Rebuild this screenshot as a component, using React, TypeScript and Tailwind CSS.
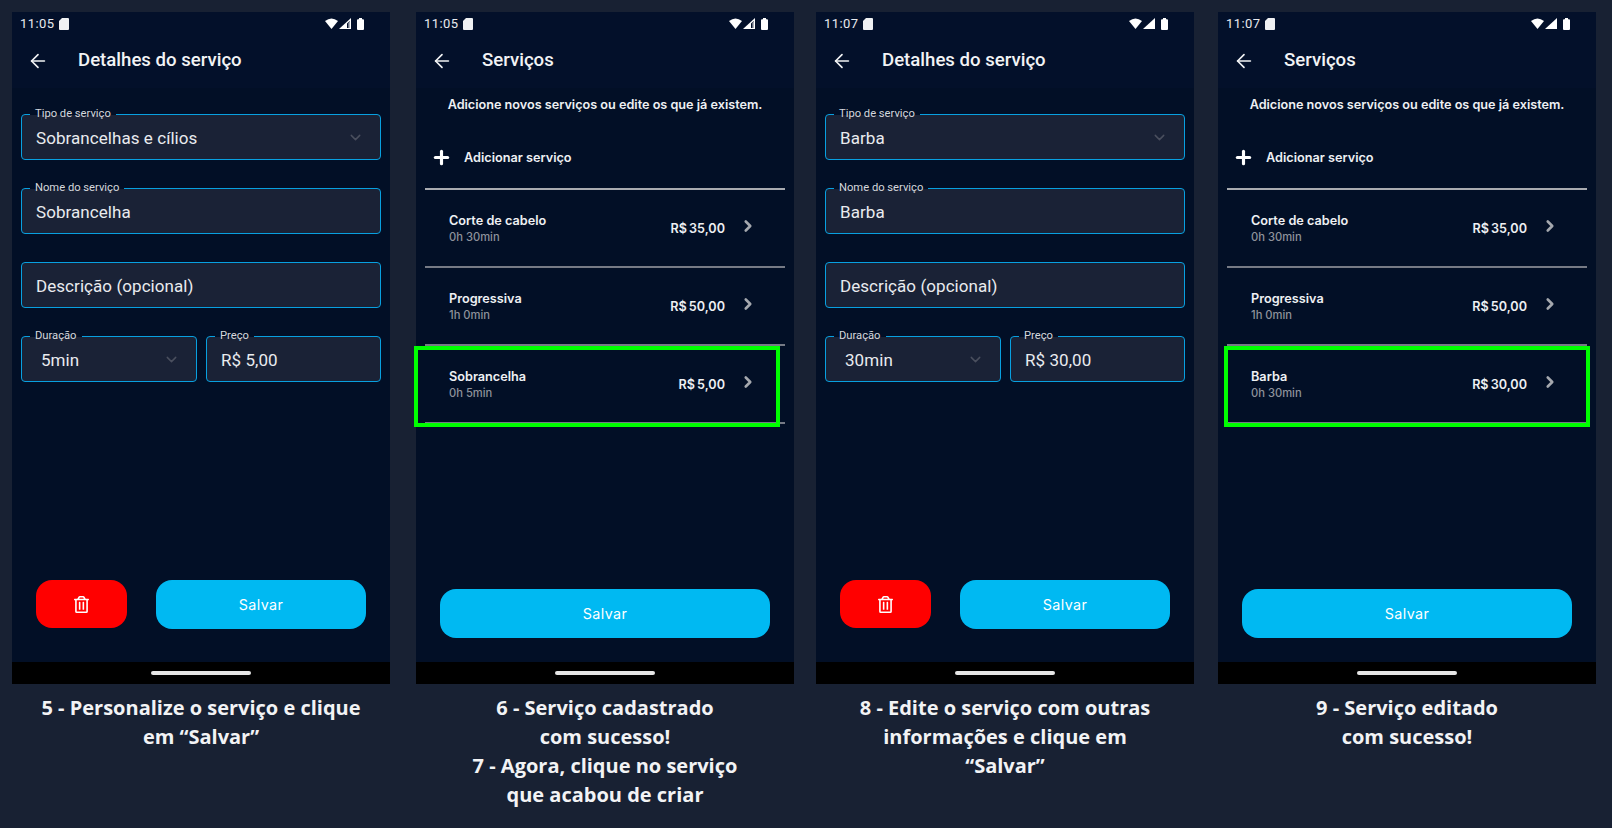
import type { ReactNode } from 'react'
import { ArrowLeft, ChevronDown, ChevronRight, Plus } from 'lucide-react'
import { FaRegTrashAlt } from 'react-icons/fa'

type Service = { name: string; time: string; price: string }

function StatusBar({ time, fullSignal }: { time: string; fullSignal: boolean }) {
  return (
    <div className="flex h-[23px] items-center pl-[8px] pr-[26px] text-[13px] text-[#e8eaee] font-['Roboto',sans-serif]">
      <span className="tracking-[0.4px]">{time}</span>
      <svg width="10" height="12" viewBox="0 0 10 12" className="ml-[5px]">
        <path d="M3 0h6a1 1 0 0 1 1 1v10a1 1 0 0 1-1 1H1a1 1 0 0 1-1-1V3z" fill="#f0f1f3" />
      </svg>
      <div className="ml-auto flex items-center">
        <svg width="13" height="11" viewBox="0 0 13 11">
          <path d="M0 3Q6.500-2 13 3L6.500 11z" fill="#fff" />
        </svg>
        <svg width="12" height="11" viewBox="0 0 12 11" className="ml-[1px]">
          <path d="M12 0v11H0z" fill="#fff" />
          {!fullSignal && <path d="M10.800 3v7H8V5.500z" fill="#03102a" />}
          {!fullSignal && <path d="M10.800 3.500v6.500H9.500V5z" fill="#c9ccd2" />}
        </svg>
        <svg width="7" height="12" viewBox="0 0 7 12" className="ml-[6px]">
          <path d="M2 0h3v1.200H6a1 1 0 0 1 1 1V11a1 1 0 0 1-1 1H1a1 1 0 0 1-1-1V2.200a1 1 0 0 1 1-1h1z" fill="#fff" />
        </svg>
      </div>
    </div>
  )
}

function Header({ title, time }: { title: string; time: string }) {
  return (
    <div className="h-[76px] bg-[#03102a]">
      <StatusBar time={time} fullSignal={time === '11:07'} />
      <div className="flex h-[52px] items-center pl-[15px] text-[#f2f3f5]">
        <ArrowLeft size={22} strokeWidth={1.8} />
        <span className="ml-[29px] text-[18.600px] font-medium font-['Roboto',sans-serif]">{title}</span>
      </div>
    </div>
  )
}

function Field({ label, value, select, className, valueClass }: {
  label?: string
  value: string
  select?: boolean
  className?: string
  valueClass?: string
}) {
  return (
    <div className={`relative flex h-[46px] items-center rounded-[4px] border border-[#08a0e0] bg-[#1a2236] ${className ?? ''}`}>
      {label && (
        <span className="absolute left-[8px] top-[-9px] bg-[linear-gradient(to_bottom,#020f26_57%,transparent_57%)] px-[5px] text-[11.200px] leading-[16px] text-[#d5d7dc] font-['Roboto',sans-serif]">
          {label}
        </span>
      )}
      <span className={`pl-[14px] pt-[3px] text-[17px] tracking-[0.06px] text-[#e9ebef] font-['Roboto',sans-serif] ${valueClass ?? ''}`}>{value}</span>
      {select && <ChevronDown size={17} strokeWidth={2} className="absolute right-[16px] top-[14px] text-[#4a4f5e]" />}
    </div>
  )
}

function Details({ time, type, name, duration, price }: {
  time: string
  type: string
  name: string
  duration: string
  price: string
}) {
  return (
    <Phone>
      <Header title="Detalhes do serviço" time={time} />
      <div className="flex flex-1 flex-col px-[9px] pt-[26px]">
        <div className="flex flex-col gap-[28px]">
          <Field label="Tipo de serviço" value={type} select />
          <Field label="Nome do serviço" value={name} />
          <Field value="Descrição (opcional)" />
          <div className="flex gap-[9px]">
            <Field label="Duração" value={duration} select className="w-[176px]" valueClass="pl-[19px]" />
            <Field label="Preço" value={price} className="flex-1" />
          </div>
        </div>
        <div className="mt-auto mb-[33px] flex gap-[29px] px-[15px]">
          <button className="flex h-[48px] w-[91px] items-center justify-center rounded-[16px] bg-[#ff0000] text-white">
            <FaRegTrashAlt size={17} />
          </button>
          <button className="flex h-[49px] w-[210px] items-center justify-center rounded-[16px] bg-[#00b9f2] text-[14.300px] tracking-[0.4px] text-white font-['Inter',sans-serif]">
            Salvar
          </button>
        </div>
      </div>
    </Phone>
  )
}

function Services({ time, items, boxLeft }: { time: string; items: Service[]; boxLeft: string }) {
  return (
    <Phone>
      <Header title="Serviços" time={time} />
      <div className="flex flex-1 flex-col font-['Inter',sans-serif]">
        <p className="mt-[8px] text-center text-[12.650px] font-semibold text-[#eef0f3]">
          Adicione novos serviços ou edite os que já existem.
        </p>
        <div className="flex h-[62px] items-center pl-[15px] pt-[24px] text-[12.700px] font-semibold text-[#eef0f3]">
          <Plus size={21} strokeWidth={3.600} className="text-white" />
          <span className="ml-[12px]">Adicionar serviço</span>
        </div>
        <div className="mx-[9px] mt-[11px]">
          {items.map((s, i) => (
            <div key={s.name} className={`flex h-[78px] items-center border-t-2 pl-[24px] pr-[28px] ${i === 0 ? 'border-[#a9abb0]' : 'border-[#767a85]'}`}>
              <div className="mt-[2px] flex flex-col">
                <span className="text-[12.700px] leading-[17px] font-semibold text-[#eef0f3]">{s.name}</span>
                <span className="text-[11.200px] leading-[16px] font-medium text-[#8e929b]">{s.time}</span>
              </div>
              <span className="ml-auto mt-[2px] text-[12.600px] font-semibold text-[#eef0f3] [word-spacing:-1px]">{s.price}</span>
              <ChevronRight size={18} strokeWidth={3.500} className="ml-[14px] mt-[-4px] text-[#a5a8ae]" />
            </div>
          ))}
          <div className="border-t-2 border-[#767a85]" />
        </div>
        <div className="mt-auto mb-[24px] px-[24px]">
          <button className="h-[49px] w-full rounded-[16px] bg-[#00b9f2] text-[14.300px] tracking-[0.4px] text-white">
            Salvar
          </button>
        </div>
      </div>
      <div className={`pointer-events-none absolute top-[334px] h-[81px] w-[366px] border-[4px] border-[#00ff00] ${boxLeft}`} />
    </Phone>
  )
}

function Phone({ children }: { children: ReactNode }) {
  return (
    <div className="relative flex h-[672px] w-[378px] shrink-0 flex-col bg-[#020f26]">
      <div className="flex flex-1 flex-col">{children}</div>
      <div className="flex h-[22px] items-center justify-center bg-black">
        <div className="h-[4px] w-[100px] rounded-full bg-[#e6e6e6]" />
      </div>
    </div>
  )
}

function Caption({ lines }: { lines: string[] }) {
  return (
    <p className="mt-[9px] text-center text-[20px] leading-[29px] font-bold text-[#f2f3f5] font-['Open_Sans',sans-serif]">
      {lines.map((l) => (
        <span key={l} className="block">{l}</span>
      ))}
    </p>
  )
}

const base: Service[] = [
  { name: 'Corte de cabelo', time: '0h 30min', price: 'R$ 35,00' },
  { name: 'Progressiva', time: '1h 0min', price: 'R$ 50,00' },
]

export default function App() {
  return (
    <div className="flex h-[828px] w-[1612px] overflow-hidden bg-[#182133] pl-[12px] pt-[12px]">
      <div className="w-[378px]">
        <Details time="11:05" type="Sobrancelhas e cílios" name="Sobrancelha" duration="5min" price="R$ 5,00" />
        <Caption lines={['5 - Personalize o serviço e clique', 'em “Salvar”']} />
      </div>
      <div className="ml-[26px] w-[378px]">
        <Services time="11:05" boxLeft="left-[-2px]" items={[...base, { name: 'Sobrancelha', time: '0h 5min', price: 'R$ 5,00' }]} />
        <Caption lines={['6 - Serviço cadastrado', 'com sucesso!', '7 - Agora, clique no serviço', 'que acabou de criar']} />
      </div>
      <div className="ml-[22px] w-[378px]">
        <Details time="11:07" type="Barba" name="Barba" duration="30min" price="R$ 30,00" />
        <Caption lines={['8 - Edite o serviço com outras', 'informações e clique em', '“Salvar”']} />
      </div>
      <div className="ml-[24px] w-[378px]">
        <Services time="11:07" boxLeft="left-[6px]" items={[...base, { name: 'Barba', time: '0h 30min', price: 'R$ 30,00' }]} />
        <Caption lines={['9 - Serviço editado', 'com sucesso!']} />
      </div>
    </div>
  )
}
